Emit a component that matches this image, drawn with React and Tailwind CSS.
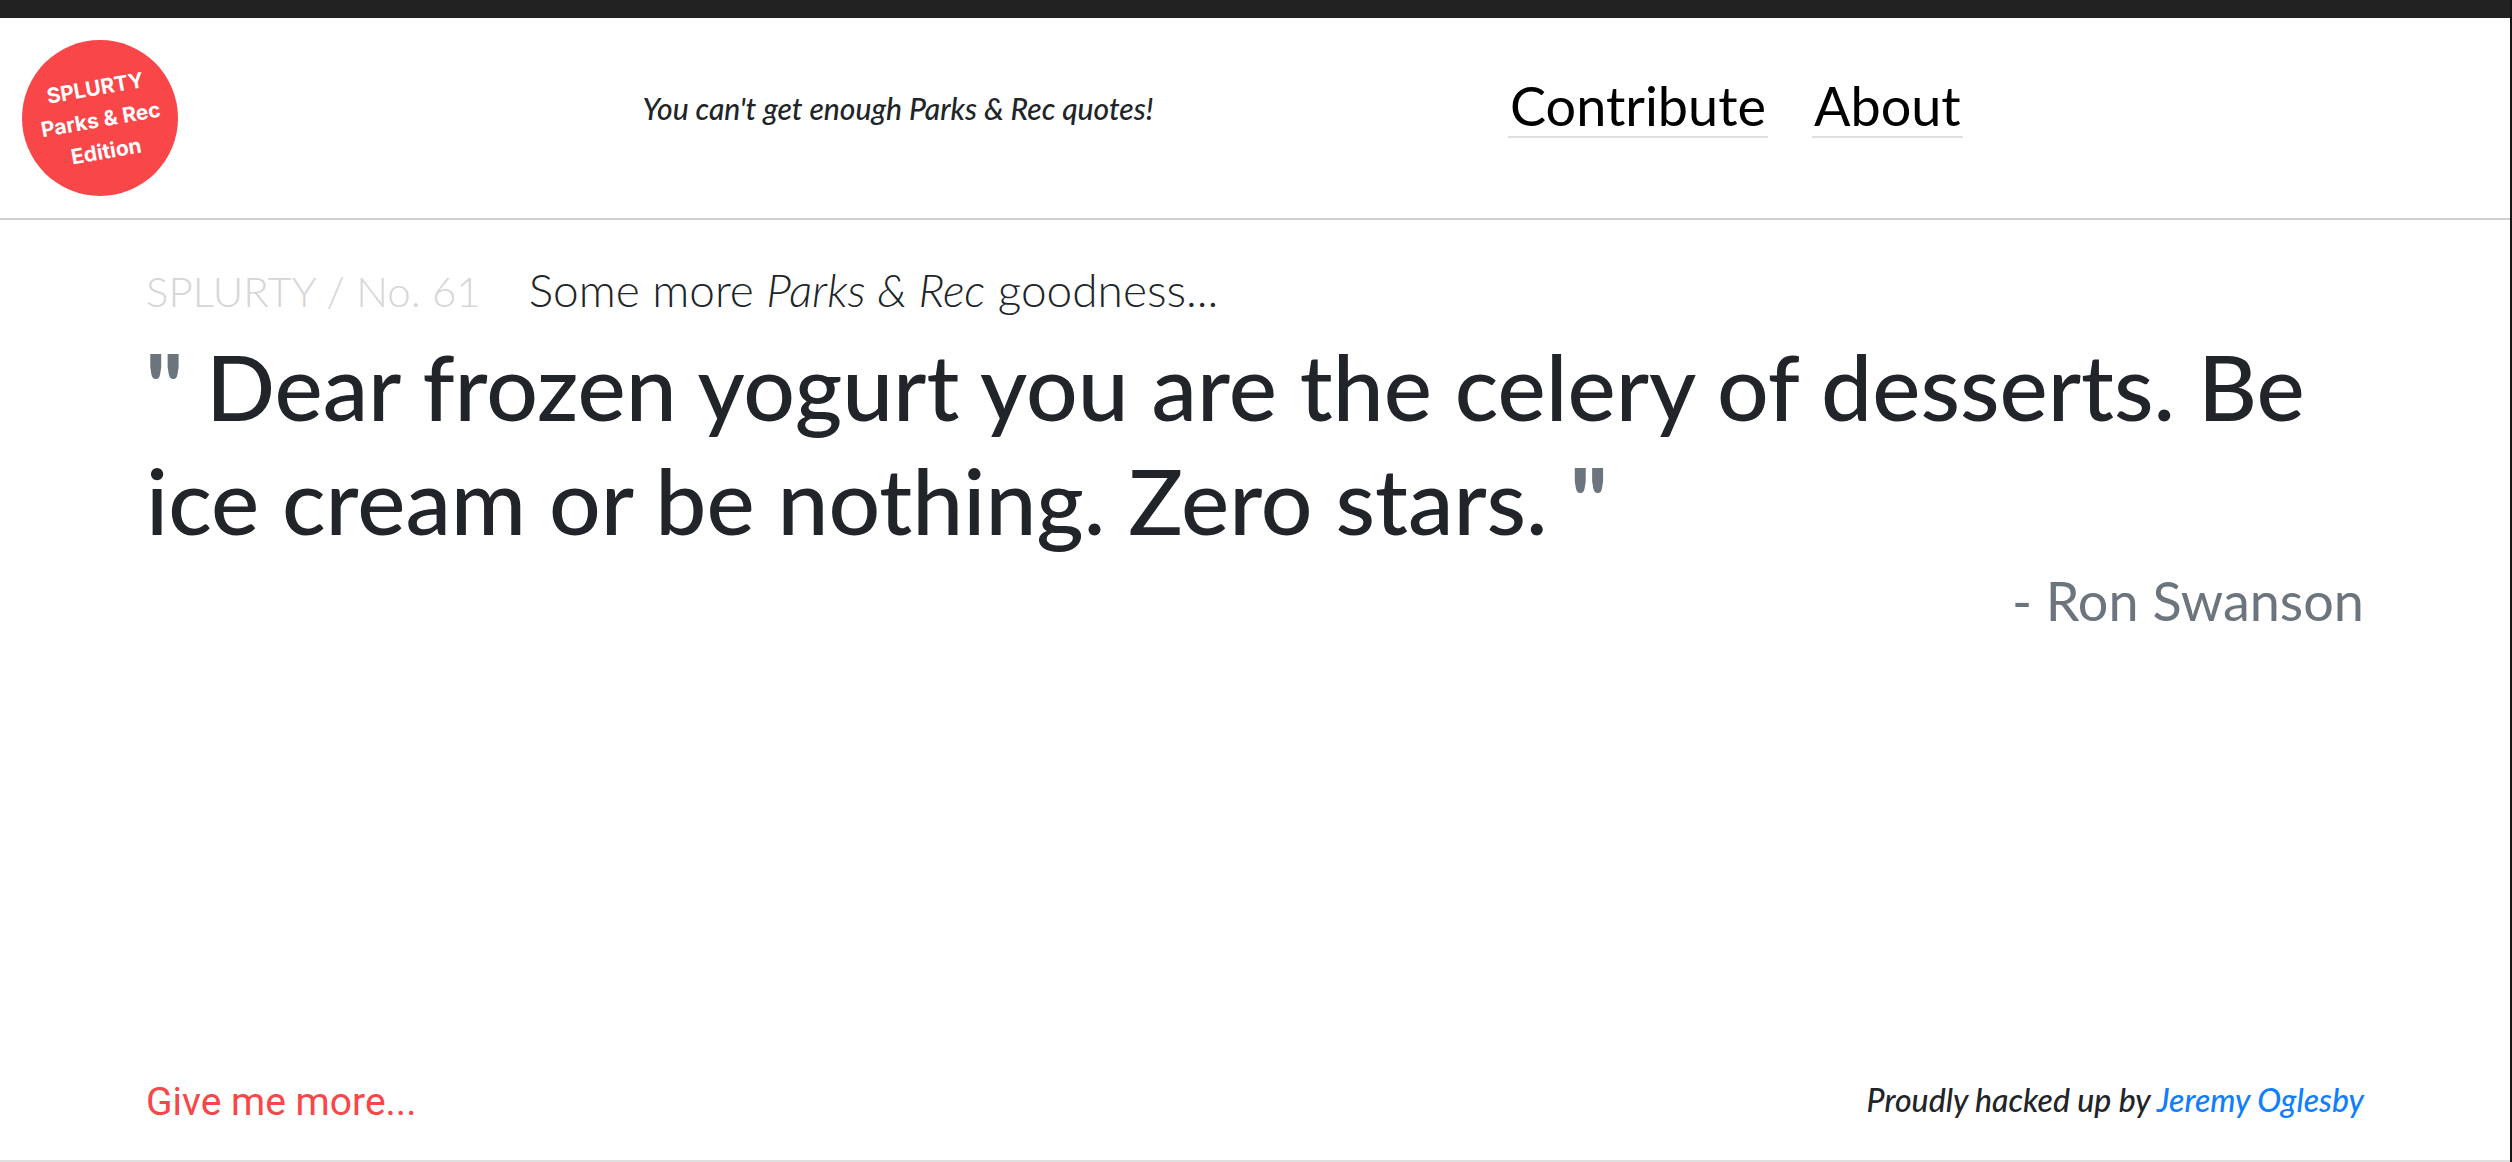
import React from "react";

function Logo() {
  return (
    <a
      href="#home"
      className="flex size-39 shrink-0 items-center justify-center rounded-full bg-[#f84649] text-white"
    >
      <span className="-rotate-10 pt-1 text-center font-['Inter',sans-serif] text-[21px] leading-8 font-bold whitespace-nowrap">
        SPLURTY
        <br />
        Parks &amp; Rec
        <br />
        Edition
      </span>
    </a>
  );
}

function NavLink({ href, children }) {
  return (
    <a href={href} className="border-b-2 border-[#dfdfdf] px-0.5 leading-15 text-black">
      {children}
    </a>
  );
}

export default function App() {
  return (
    <div className="flex min-h-screen flex-col border-r-2 border-[#161616] bg-white font-['Lato',sans-serif] text-[#212529]">
      <div className="h-4.5 bg-[#222222]" />
      <header className="grid grid-cols-[24%_36%_40%] border-b-2 border-[#d0d0d0] py-5.5">
        <div className="pl-5.5">
          <Logo />
        </div>
        <p className="pt-12 pl-10 text-[30px] leading-10 font-medium whitespace-nowrap italic">
          You can't get enough Parks &amp; Rec quotes!
        </p>
        <nav className="flex items-start gap-11 pt-9 pl-0.5 text-[54px] whitespace-nowrap">
          <NavLink href="#contribute">Contribute</NavLink>
          <NavLink href="#about">About</NavLink>
        </nav>
      </header>
      <main className="flex-1 px-36.5 pt-10">
        <p className="flex items-baseline gap-12 leading-15 font-light">
          <span className="text-[42px] text-[#d6d6d6]">SPLURTY / No. 61</span>
          <span className="text-[46px]">
            Some more <em>Parks &amp; Rec</em> goodness...
          </span>
        </p>
        <blockquote className="mt-2 text-[91px] leading-[114px] font-medium">
          <span className="font-black text-[#6c757d]">"</span> Dear frozen yogurt you are the celery of
          desserts. Be ice cream or be nothing. Zero stars.{" "}
          <span className="font-black text-[#6c757d]">"</span>
        </blockquote>
        <p className="pt-2 text-right text-[54px] leading-18 text-[#6c757d]">- Ron Swanson</p>
      </main>
      <footer className="flex items-center justify-between border-b-2 border-[#dfdfdf] px-36.5 pb-7">
        <button type="button" className="font-['Roboto',sans-serif] text-[39px] leading-15 text-[#f84649]">
          Give me more...
        </button>
        <p className="pb-1 text-[32px] leading-12 font-medium italic">
          Proudly hacked up by{" "}
          <a href="#author" className="text-[#117dff]">
            Jeremy Oglesby
          </a>
        </p>
      </footer>
    </div>
  );
}
